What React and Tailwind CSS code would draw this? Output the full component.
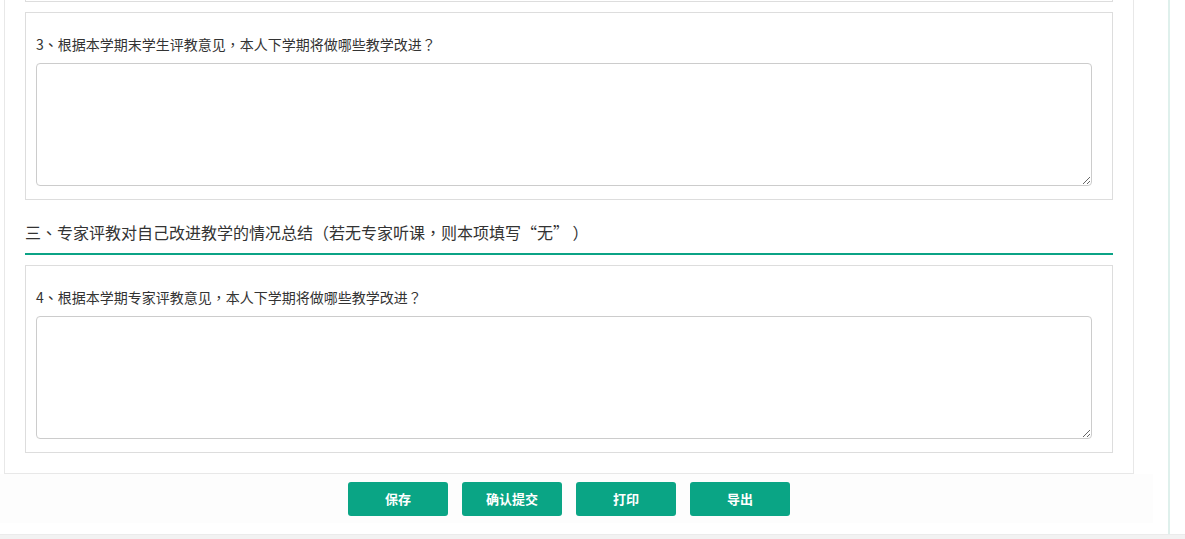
export default function App() {
    const font = { fontFamily: '"Noto Sans CJK TC", "Microsoft YaHei", sans-serif' };

    const Question = ({ label }) => (
        <div className="border border-[#dddddd] bg-white pl-[10px] pr-[20px] pt-[21px] pb-[13px]">
            <div className="text-[14px] leading-[20px] text-[#333333]">{label}</div>
            <textarea className="block mt-[9px] w-full h-[123px] border border-[#cccccc] rounded-[4px] bg-white outline-none" />
        </div>
    );

    return (
        <div className="w-[1185px] h-[539px] overflow-hidden bg-white flex flex-col" style={font}>
            <div className="flex-1 flex min-h-0">
                <div className="w-[1168px] flex flex-col">
                    {/* Main panel */}
                    <div className="ml-[4px] w-[1130px] border-x border-b border-[#e8e8e8] px-[20px] pb-[20px]">
                        {/* Previous card, scrolled off */}
                        <div className="h-[2px] border-x border-b border-[#dddddd]" />

                        <div className="mt-[10px]">
                            <Question label="3、根据本学期末学生评教意见，本人下学期将做哪些教学改进？" />
                        </div>

                        {/* Section header */}
                        <div className="mt-[20px] pb-[9px] border-b-2 border-[#0ba386] text-[16px] leading-[24px] text-[#333333]">
                            三、专家评教对自己改进教学的情况总结（若无专家听课，则本项填写“无” ）
                        </div>

                        <div className="mt-[10px]">
                            <Question label="4、根据本学期专家评教意见，本人下学期将做哪些教学改进？" />
                        </div>
                    </div>

                    {/* Action bar */}
                    <div className="w-[1153px] h-[49px] bg-[#fdfdfd] pt-[8px]">
                        <div className="ml-[4px] w-[1130px] flex justify-center gap-[14px]">
                            {["保存", "确认提交", "打印", "导出"].map((t) => (
                                <button
                                    key={t}
                                    className="w-[100px] h-[34px] rounded-[3px] bg-[#0aa585] text-white text-[13px] font-bold"
                                >
                                    {t}
                                </button>
                            ))}
                        </div>
                    </div>
                </div>
                <div className="w-[2px] bg-[#dff0ec]" />
                <div className="flex-1 bg-white" />
            </div>
            <div className="h-[5px] bg-[#f2f2f2] border-t border-[#ebebeb]" />
        </div>
    );
}
